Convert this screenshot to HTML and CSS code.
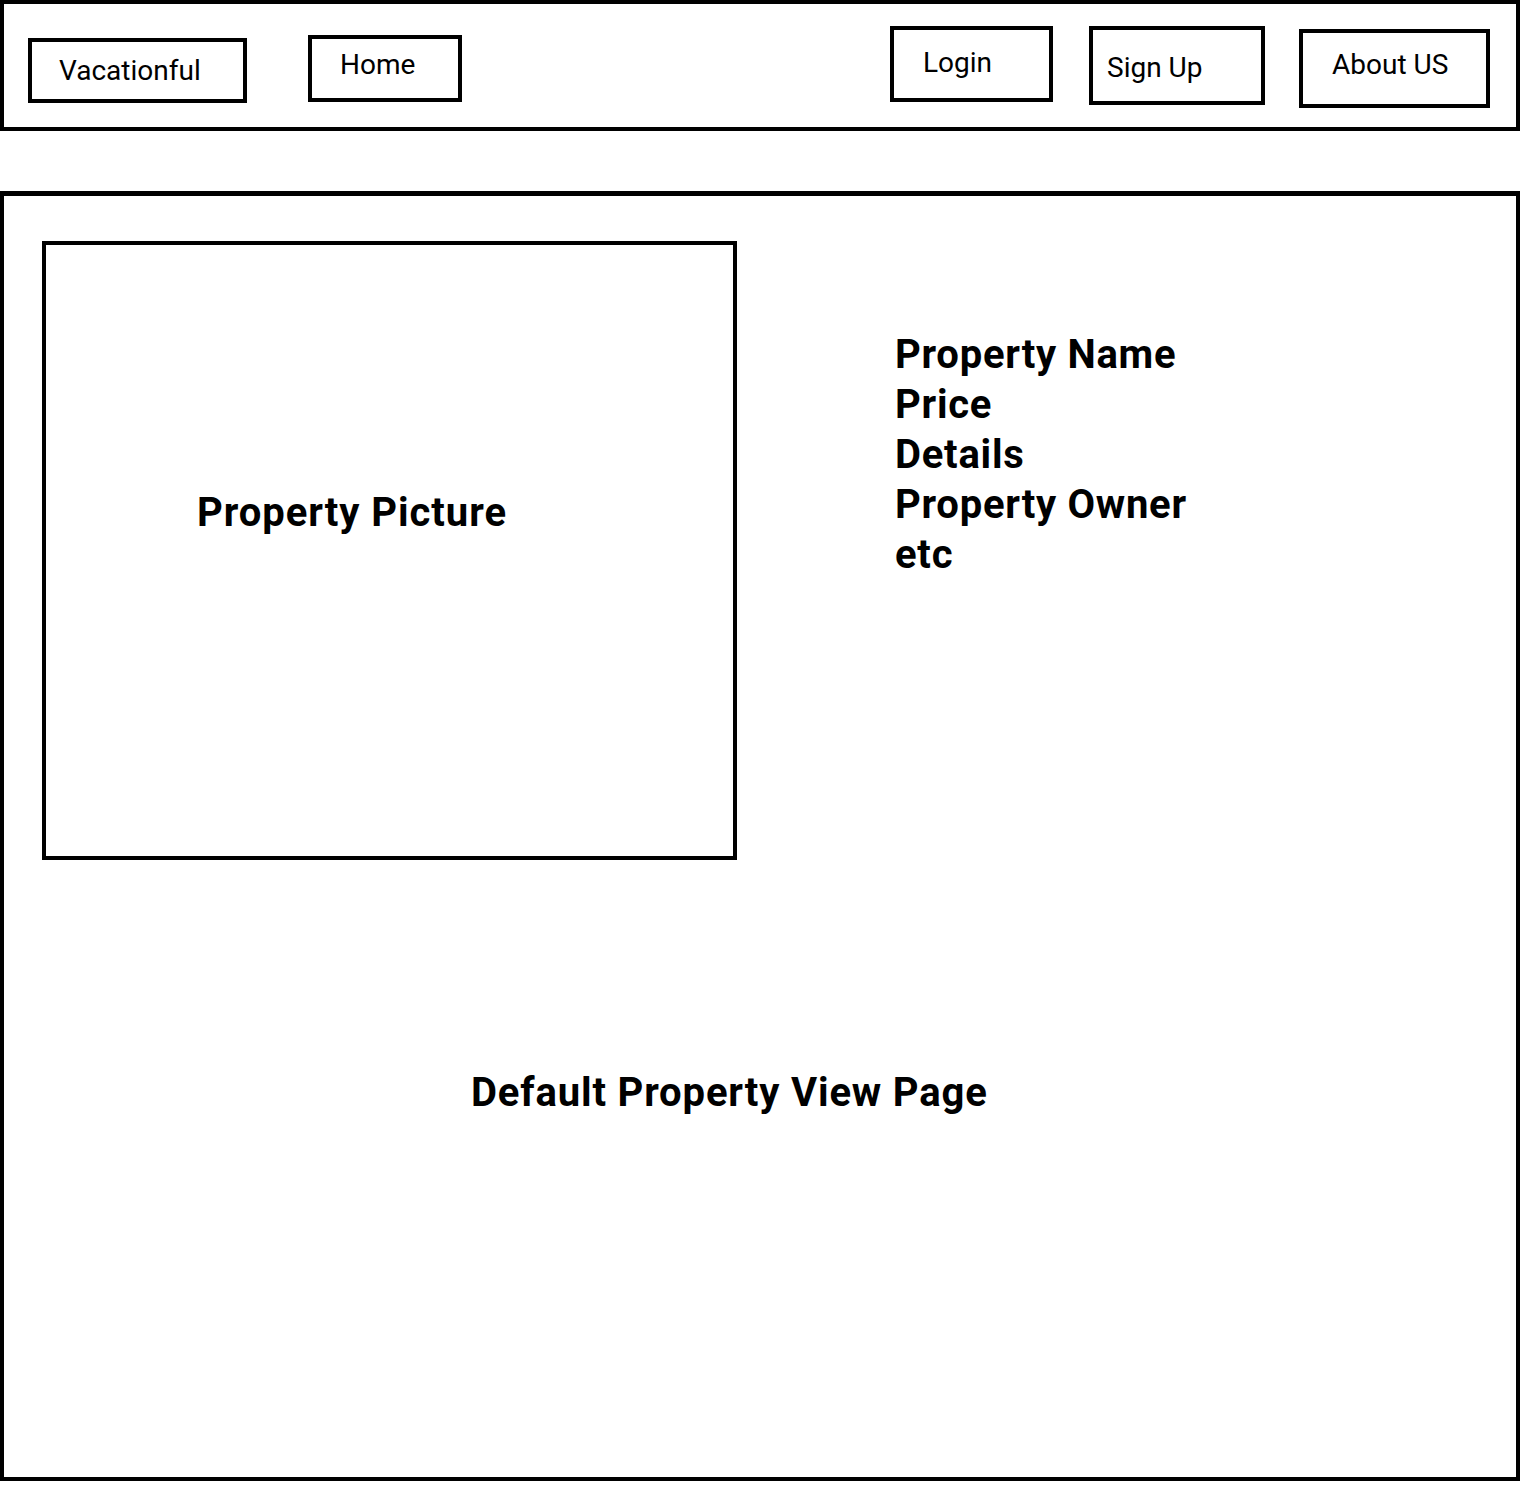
FILE: index.html
```html
<!DOCTYPE html>
<html lang="en">
<head>
<meta charset="utf-8">
<title>Vacationful - Default Property View Page</title>
<link rel="stylesheet" href="styles.css">
</head>
<body>
<header class="topbar">
  <a class="navbox nav-brand" href="#">Vacationful</a>
  <a class="navbox nav-home" href="#">Home</a>
  <span class="spacer"></span>
  <a class="navbox nav-login" href="#">Login</a>
  <a class="navbox nav-signup" href="#">Sign Up</a>
  <a class="navbox nav-about" href="#">About US</a>
</header>
<main class="page">
  <div class="row">
    <div class="picture">Property Picture</div>
    <ul class="details">
      <li>Property Name</li>
      <li>Price</li>
      <li>Details</li>
      <li>Property Owner</li>
      <li>etc</li>
    </ul>
  </div>
  <h1 class="caption">Default Property View Page</h1>
</main>
</body>
</html>
```
FILE: styles.css
```css
* { box-sizing: border-box; }
html, body { margin: 0; padding: 0; background: #fff; }
body {
  font-family: Roboto, "Liberation Sans", Arial, sans-serif;
  color: #000;
  width: 1523px;
}
.topbar {
  display: flex;
  align-items: flex-start;
  width: 1520px;
  height: 131px;
  border: 4px solid #000;
  padding-left: 24px;
}
.navbox {
  display: flex;
  align-items: center;
  border: 4px solid #000;
  color: #000;
  text-decoration: none;
  font-size: 28px;
  line-height: 30px;
  white-space: nowrap;
}
.nav-brand { width: 219px; height: 65px; margin-top: 34px; padding-left: 27px; }
.nav-home { width: 154px; height: 67px; margin-top: 31px; margin-left: 61px; padding-left: 28px; padding-bottom: 7px; }
.spacer { flex: 1; max-width: 428px; }
.nav-login { width: 163px; height: 76px; margin-top: 22px; padding-left: 29px; padding-bottom: 2px; }
.nav-signup { width: 176px; height: 79px; margin-top: 22px; margin-left: 36px; padding-left: 14px; padding-top: 5px; }
.nav-about { width: 191px; height: 79px; margin-top: 25px; margin-left: 34px; padding-left: 29px; padding-bottom: 7px; }

.page {
  margin-top: 60px;
  width: 1520px;
  height: 1290px;
  border: 4px solid #000;
  border-top-width: 5px;
}
.row {
  display: flex;
  align-items: flex-start;
}
.picture {
  width: 695px;
  height: 619px;
  margin-top: 45px;
  margin-left: 38px;
  border: 4px solid #000;
  padding-top: 243px;
  padding-left: 151px;
  font-size: 40px;
  line-height: 50px;
  font-weight: 700;
  letter-spacing: 0.95px;
}
.details {
  list-style: none;
  margin: 134px 0 0 158px;
  padding: 0;
  font-size: 40px;
  line-height: 50px;
  font-weight: 700;
  letter-spacing: 0.75px;
}
.caption {
  margin: 208px 0 0 0;
  padding-left: 467px;
  font-size: 40px;
  line-height: 50px;
  font-weight: 700;
  letter-spacing: 0.85px;
}
```
